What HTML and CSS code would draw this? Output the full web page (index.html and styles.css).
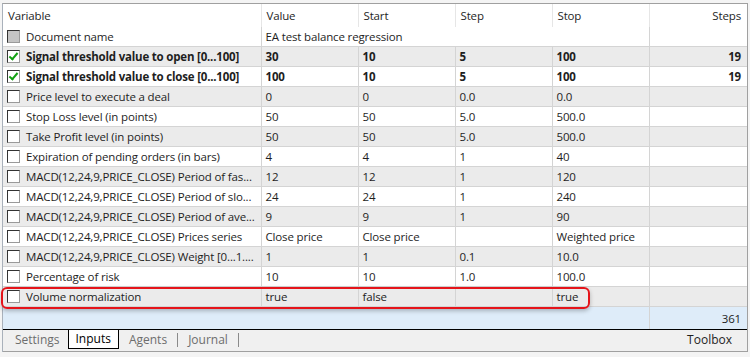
FILE: index.html
```html
<!DOCTYPE html>
<html lang="en">
<head>
  <meta charset="UTF-8">
  <title>Tester inputs</title>
  <link rel="stylesheet" href="styles.css">
</head>
<body>

<div class="panel">
  <table class="grid">
    <colgroup>
      <col class="c-var"><col class="c-num"><col class="c-num"><col class="c-num"><col class="c-num"><col class="c-steps">
    </colgroup>
    <thead>
      <tr><th>Variable</th><th>Value</th><th>Start</th><th>Step</th><th>Stop</th><th class="right">Steps</th></tr>
    </thead>
    <tbody>
      <tr class="doc">
        <td><span class="cb disabled"></span>Document name</td>
        <td colspan="4">EA test balance regression</td>
        <td></td>
      </tr>
      <tr class="bold">
        <td><span class="cb checked"></span>Signal threshold value to open [0...100]</td>
        <td>30</td><td>10</td><td>5</td><td>100</td><td class="right">19</td>
      </tr>
      <tr class="bold">
        <td><span class="cb checked"></span>Signal threshold value to close [0...100]</td>
        <td>100</td><td>10</td><td>5</td><td>100</td><td class="right">19</td>
      </tr>
      <tr>
        <td><span class="cb"></span>Price level to execute a deal</td>
        <td>0</td><td>0</td><td>0.0</td><td>0.0</td><td></td>
      </tr>
      <tr>
        <td><span class="cb"></span>Stop Loss level (in points)</td>
        <td>50</td><td>50</td><td>5.0</td><td>500.0</td><td></td>
      </tr>
      <tr>
        <td><span class="cb"></span>Take Profit level (in points)</td>
        <td>50</td><td>50</td><td>5.0</td><td>500.0</td><td></td>
      </tr>
      <tr>
        <td><span class="cb"></span>Expiration of pending orders (in bars)</td>
        <td>4</td><td>4</td><td>1</td><td>40</td><td></td>
      </tr>
      <tr>
        <td><span class="cb"></span>MACD(12,24,9,PRICE_CLOSE) Period of fas...</td>
        <td>12</td><td>12</td><td>1</td><td>120</td><td></td>
      </tr>
      <tr>
        <td><span class="cb"></span>MACD(12,24,9,PRICE_CLOSE) Period of slo...</td>
        <td>24</td><td>24</td><td>1</td><td>240</td><td></td>
      </tr>
      <tr>
        <td><span class="cb"></span>MACD(12,24,9,PRICE_CLOSE) Period of ave...</td>
        <td>9</td><td>9</td><td>1</td><td>90</td><td></td>
      </tr>
      <tr>
        <td><span class="cb"></span>MACD(12,24,9,PRICE_CLOSE) Prices series</td>
        <td>Close price</td><td>Close price</td><td></td><td>Weighted price</td><td></td>
      </tr>
      <tr>
        <td><span class="cb"></span>MACD(12,24,9,PRICE_CLOSE) Weight [0...1....</td>
        <td>1</td><td>1</td><td>0.1</td><td>10.0</td><td></td>
      </tr>
      <tr>
        <td><span class="cb"></span>Percentage of risk</td>
        <td>10</td><td>10</td><td>1.0</td><td>100.0</td><td></td>
      </tr>
      <tr>
        <td><span class="cb"></span>Volume normalization</td>
        <td>true</td><td>false</td><td></td><td>true</td><td></td>
      </tr>
    </tbody>
    <tfoot>
      <tr class="total"><td colspan="5"></td><td class="right">361</td></tr>
    </tfoot>
  </table>

  <div class="mark"></div>

  <div class="tabs">
    <span class="tab">Settings</span>
    <span class="tab active">Inputs</span>
    <span class="tab">Agents</span>
    <span class="sep"></span>
    <span class="tab">Journal</span>
    <span class="sep"></span>
    <span class="toolbox">Toolbox</span>
  </div>
</div>

</body>
</html>
```

FILE: styles.css
```css
body {
  margin: 0;
  background: #f4f4f4;
  font-family: "Open Sans", sans-serif;
  font-size: 11.5px;
  letter-spacing: -0.15px;
  color: #1e1e1e;
}
.panel {
  position: relative;
  margin: 3px 2px 0 2px;
  border-top: 1px solid #a0a0a0;
  border-left: 1px solid #a9b1bb;
  border-right: 1px solid #a0a0a0;
  background: #fff;
}
.grid {
  width: 100%;
  border-collapse: collapse;
  table-layout: fixed;
}
.c-var { width: 258px; }
.c-num { width: 97px; }
.grid th {
  height: 23px;
  padding: 0 5px;
  font-weight: normal;
  text-align: left;
  border-left: 1px solid #e6e6e6;
}
.grid th:first-child { border-left: none; }
.grid td {
  height: 19px;
  padding: 0 4px;
  white-space: nowrap;
  overflow: hidden;
  border-top: 1px solid #d4d4d4;
  border-left: 1px solid #d4d4d4;
}
.grid td:first-child { border-left: none; padding-left: 4px; }
.grid tr.doc td { border-top: none; }
.grid tbody tr:nth-child(even) td { background: #ebebeb; }
.grid .right { text-align: right; padding-right: 6px; }
.bold td { font-weight: bold; letter-spacing: -0.2px; }
.total td {
  height: 22px;
  background: #deecf9;
  border-left: none;
}
.total td.right { border-left: 1px solid #d4d4d4; }

.cb {
  display: inline-block;
  box-sizing: border-box;
  width: 13px;
  height: 13px;
  margin: 0 6px 0 0;
  vertical-align: -2px;
  background: #fff;
  border: 1px solid #333;
  border-right-color: #9a9a9a;
  border-bottom-color: #9a9a9a;
  position: relative;
}
.cb.disabled { background: #c4c4c4; }
.cb.checked::after {
  content: "";
  position: absolute;
  left: 3px;
  top: 0px;
  width: 3px;
  height: 7px;
  border: solid #12a012;
  border-width: 0 2px 2px 0;
  transform: rotate(40deg);
}

.mark {
  position: absolute;
  left: -2px;
  top: 283px;
  width: 585px;
  height: 18px;
  border: 2px solid #e5141a;
  border-radius: 6px;
  box-shadow: 0 2px 4px rgba(0, 0, 0, 0.25);
}

.tabs {
  display: flex;
  align-items: stretch;
  height: 21px;
  border-top: 1px solid #000;
  border-bottom: 1px solid #a0a0a0;
  background: #f0f0f0;
  color: #6d6d6d;
  font-size: 12px;
  letter-spacing: 0;
  padding-left: 11px;
}
.tab {
  padding: 1px 10px 0 1px;
  line-height: 18px;
}
.tab.active {
  background: #fff;
  color: #000;
  border: 1px solid #000;
  border-top: none;
  height: 18px;
  padding: 0 7px;
  margin: 0 9px 0 -2px;
}
.sep {
  width: 1px;
  height: 14px;
  margin: 3px 9px 0 0;
  background: #8a8a8a;
}
.toolbox {
  margin-left: auto;
  padding: 1px 15px 0 0;
  line-height: 18px;
  color: #1e1e1e;
}
```
